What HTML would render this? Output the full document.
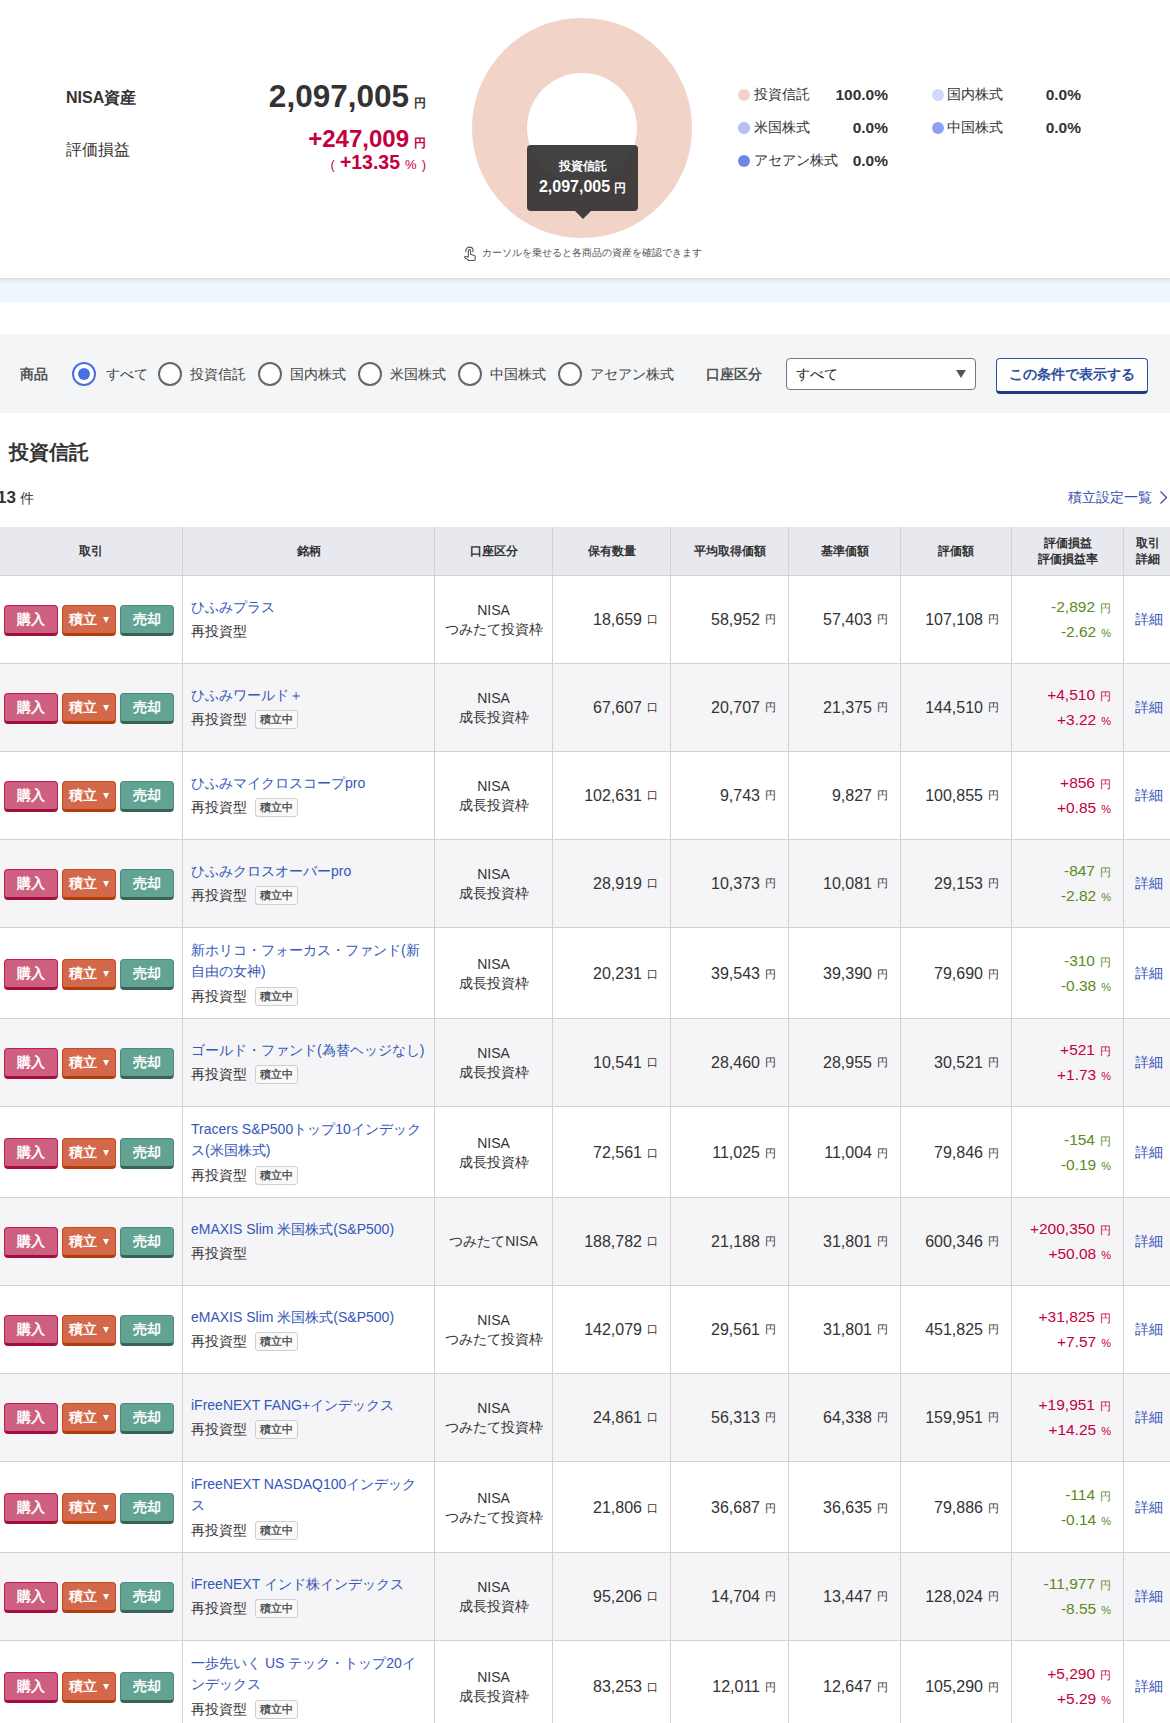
<!DOCTYPE html><html lang="ja"><head><meta charset="utf-8"><style>
*{box-sizing:border-box;margin:0;padding:0}
html,body{width:1170px;height:1723px;overflow:hidden;background:#fff}
body{font-family:"Liberation Sans",sans-serif;color:#333;position:relative}
.abs{position:absolute;white-space:nowrap}
#top{position:absolute;left:0;top:0;width:1170px;height:278px;background:#fff}
#band{position:absolute;left:0;top:278px;width:1170px;height:24px;background:linear-gradient(#d7dde4 0,#e3eaf1 2px,#ebf3f9 4px,#eff7fd 7px,#eff7fd 100%)}
#filter{position:absolute;left:0;top:334px;width:1170px;height:79px;background:#f4f5f7}
.lbl{font-size:16px;line-height:20px}
.big{font-weight:bold;font-size:31.5px;line-height:36px;color:#333;text-align:right}
.yen{display:inline-block;width:12px;font-size:12px;font-weight:bold;margin-left:5px}
.ib{display:inline-block;white-space:nowrap}
.red{color:#c4003c}
.donut{position:absolute;left:472px;top:18px;width:220px;height:220px;border-radius:50%;background:#f2d3c7}
.donut:after{content:"";position:absolute;left:55px;top:55px;width:110px;height:110px;border-radius:50%;background:#fff}
.tip{position:absolute;left:527px;top:145px;width:111px;height:66px;border-radius:4px;background:rgba(46,46,46,.9);color:#fff;text-align:center;font-weight:bold}
.tip:after{content:"";position:absolute;left:47.5px;top:66px;border-left:8px solid transparent;border-right:8px solid transparent;border-top:8px solid rgba(46,46,46,.9)}
.leg{position:absolute;font-size:14px;line-height:18px}
.dot{position:absolute;width:12px;height:12px;border-radius:50%}
.pct{position:absolute;font-size:15.5px;font-weight:bold;line-height:18px;text-align:right;width:80px}
.radio{position:absolute;top:362px;width:24px;height:24px;border-radius:50%;border:2px solid #666;background:#fff}
.radio.on{border:2.5px solid #4a6fe0}
.radio.on:after{content:"";position:absolute;left:3.5px;top:3.5px;width:12px;height:12px;border-radius:50%;background:#4a6fe0}
.rl{position:absolute;top:365px;font-size:14px;line-height:18px;color:#444}

.tbl{position:absolute;left:0;top:527px;width:1170px}
.tr{display:flex;border-bottom:1px solid #d2d2d2}
.tr.h{height:49px;background:#e8e9ee}
.tr.w{background:#fff}
.tr.g{background:#f5f5f7}
.td{border-right:1px solid #d2d2d2;flex:none;display:flex;align-items:center;position:relative}
.c1{width:183px}.c2{width:252px}.c3{width:118px}.c4{width:118px}.c5{width:118px}.c6{width:112px}.c7{width:111px}.c8{width:112px}.c9{width:47px;border-right:none}
.h .td{justify-content:center;text-align:center;font-size:12px;font-weight:bold;line-height:16px;color:#333}
.btn{position:absolute;top:50%;margin-top:-15px;height:31px;width:54px;border-radius:4px;color:#fff;font-weight:bold;font-size:14px;line-height:26px;text-align:center;border:1px solid;border-bottom-width:3px}
.b1{left:4px;background:#cd5f80;border-color:#c41a4c;border-bottom-color:#a50d3c}
.b2{left:62px;background:#d3694a;border-color:#c54a18;border-bottom-color:#b03e0c}
.b3{left:120px;background:#62a393;border-color:#4e8a79;border-bottom-color:#3a6355}
.caret{display:inline-block;width:0;height:0;border-left:3.5px solid transparent;border-right:3.5px solid transparent;border-top:6px solid #fff;margin-left:6px;vertical-align:1px}
.nm{padding-left:8px;padding-top:3px;font-size:14px;line-height:21.5px}
.nm a{color:#3457b8;text-decoration:none;display:block;white-space:nowrap;position:relative;top:-1px}
.typ{display:block;height:25px;line-height:25px;color:#333}
.badge{display:inline-block;vertical-align:top;margin-top:3px;margin-left:8px;height:19px;line-height:17px;padding:0 4px;border:1px solid #cfcfcf;border-radius:3px;background:#f9f9f9;font-size:11px;font-weight:bold;color:#555}
.acct{justify-content:center;text-align:center;font-size:14px;line-height:19px;color:#333}
.num{justify-content:flex-end;padding-right:12px;font-size:16px;color:#333}
.u{display:inline-block;width:11px;font-size:11px;margin-left:5px}
.t3 .c1 .btn{margin-top:-14px}.t3 .c3,.t3 .c4,.t3 .c5,.t3 .c6,.t3 .c7,.t3 .c8,.t3 .c9{padding-top:2px}
.u.pc{width:auto}
.pl{justify-content:flex-end;padding-right:12px;text-align:right;font-size:15.5px;line-height:24px}
.grn{color:#5b8a1e}.crm{color:#c4003c}
.det{padding-left:11px;font-size:14px;color:#3150b5}

</style></head><body>
<div id="top">
<div class="abs lbl" style="left:66px;top:88px;font-weight:bold">NISA資産</div>
<div class="abs lbl" style="left:66px;top:140px">評価損益</div>
<div class="abs big" style="right:744px;top:78px">2,097,005<span class="yen">円</span></div>
<div class="abs red" style="right:744px;top:126px;font-weight:bold;font-size:24px;line-height:26px">+247,009<span class="yen">円</span></div>
<div class="abs red" style="right:744px;top:151px;font-size:18px;line-height:22px"><span style="font-size:13px">(</span> <b style="font-size:19.5px">+13.35</b> <span style="font-size:13px">%</span> <span style="font-size:13px">)</span></div>
<div class="donut"></div>
<div class="tip"><div style="font-size:12px;line-height:14px;margin-top:13.5px">投資信託</div><div style="font-size:16px;line-height:18px;margin-top:5px">2,097,005<span style="display:inline-block;width:12px;font-size:12px;margin-left:4px">円</span></div></div>
<svg style="position:absolute;left:458px;top:242px" width="24" height="24" viewBox="0 0 24 24" fill="none" stroke="#555" stroke-width="1.1" stroke-linejoin="round"><path d="M7.9 10.2V8.7A3.55 3.55 0 0 1 15 8.7V10.2"/><path d="M10.4 15.2V8.7A1.1 1.1 0 0 1 12.6 8.7V12.3L16.3 13.6Q17.2 14 17.2 15V17.6Q17.2 18.5 16.3 18.5H10.8L6.8 15.6Q6.5 15 7.2 14.6Q8.2 14.2 10.4 15.2"/></svg>
<div class="abs" style="left:482px;top:246px;font-size:10px;line-height:14px;color:#555">カーソルを乗せると各商品の資産を確認できます</div>
<div class="dot" style="left:738px;top:89px;background:#f2d3c7"></div>
<div class="leg" style="left:754px;top:85px">投資信託</div>
<div class="pct" style="left:808px;top:86px">100.0%</div>
<div class="dot" style="left:738px;top:122px;background:#b4bff7"></div>
<div class="leg" style="left:754px;top:118px">米国株式</div>
<div class="pct" style="left:808px;top:119px">0.0%</div>
<div class="dot" style="left:738px;top:155px;background:#7089e6"></div>
<div class="leg" style="left:754px;top:151px">アセアン株式</div>
<div class="pct" style="left:808px;top:152px">0.0%</div>
<div class="dot" style="left:932px;top:89px;background:#d2d9fb"></div>
<div class="leg" style="left:947px;top:85px">国内株式</div>
<div class="pct" style="left:1001px;top:86px">0.0%</div>
<div class="dot" style="left:932px;top:122px;background:#8ea0ee"></div>
<div class="leg" style="left:947px;top:118px">中国株式</div>
<div class="pct" style="left:1001px;top:119px">0.0%</div>
</div>
<div id="band"></div>
<div id="filter"></div>
<div class="abs" style="left:20px;top:365px;font-size:14px;line-height:18px;color:#555;font-weight:bold">商品</div>
<div class="radio on" style="left:72px"></div>
<div class="rl" style="left:106px">すべて</div>
<div class="radio" style="left:158px"></div>
<div class="rl" style="left:190px">投資信託</div>
<div class="radio" style="left:258px"></div>
<div class="rl" style="left:290px">国内株式</div>
<div class="radio" style="left:358px"></div>
<div class="rl" style="left:390px">米国株式</div>
<div class="radio" style="left:458px"></div>
<div class="rl" style="left:490px">中国株式</div>
<div class="radio" style="left:558px"></div>
<div class="rl" style="left:590px">アセアン株式</div>
<div class="abs" style="left:706px;top:365px;font-size:14px;line-height:18px;color:#555;font-weight:bold">口座区分</div>
<div class="abs" style="left:786px;top:358px;width:190px;height:32px;border:1px solid #767676;border-radius:4px;background:#fff"><span style="position:absolute;left:9px;top:6px;font-size:14px;line-height:18px;color:#222">すべて</span><span style="position:absolute;left:169px;top:11px;width:0;height:0;border-left:5.5px solid transparent;border-right:5.5px solid transparent;border-top:8px solid #555"></span></div>
<div class="abs" style="left:996px;top:358px;width:152px;height:36px;border:1px solid #2d50a0;border-bottom:3px solid #1f3a80;border-radius:4px;background:#fff;text-align:center;font-size:14px;line-height:31px;font-weight:bold;color:#2d4f9c">この条件で表示する</div>
<div class="abs" style="left:8.5px;top:440px;font-size:20px;line-height:24px;font-weight:bold;color:#333">投資信託</div>
<div class="abs" style="left:-3px;top:487.5px;font-size:17px;line-height:20px;font-weight:bold;color:#333">13<span style="font-size:14px;font-weight:normal;margin-left:4px">件</span></div>
<div class="abs" style="left:1068px;top:488px;font-size:14px;line-height:18px;color:#3850b0"><span class="ib" style="width:84px">積立設定一覧</span></div><svg style="position:absolute;left:1159px;top:490px" width="10" height="15" viewBox="0 0 10 15" fill="none" stroke="#3850b0" stroke-width="1.3"><path d="M1.5 1.5L7.5 7.5L1.5 13.5"/></svg>
<div class="tbl">
<div class="tr h"><div class="td c1">取引</div><div class="td c2">銘柄</div><div class="td c3">口座区分</div><div class="td c4">保有数量</div><div class="td c5">平均取得価額</div><div class="td c6">基準価額</div><div class="td c7">評価額</div><div class="td c8">評価損益<br>評価損益率</div><div class="td c9">取引<br>詳細</div></div>
<div class="tr w" style="height:88px"><div class="td c1"><div class="btn b1">購入</div><div class="btn b2"><span class="ib" style="width:28px">積立</span><span class="caret"></span></div><div class="btn b3">売却</div></div><div class="td c2"><div class="nm"><a>ひふみプラス</a><span class="typ"><span class="ib" style="width:56px">再投資型</span></span></div></div><div class="td c3 acct"><div>NISA<br>つみたて投資枠</div></div><div class="td c4 num">18,659<span class="u">口</span></div><div class="td c5 num">58,952<span class="u">円</span></div><div class="td c6 num">57,403<span class="u">円</span></div><div class="td c7 num">107,108<span class="u">円</span></div><div class="td c8 pl grn"><div>-2,892<span class="u">円</span><br>-2.62<span class="u pc">%</span></div></div><div class="td c9 det">詳細</div></div>
<div class="tr g" style="height:88px"><div class="td c1"><div class="btn b1">購入</div><div class="btn b2"><span class="ib" style="width:28px">積立</span><span class="caret"></span></div><div class="btn b3">売却</div></div><div class="td c2"><div class="nm"><a>ひふみワールド＋</a><span class="typ"><span class="ib" style="width:56px">再投資型</span><span class="badge">積立中</span></span></div></div><div class="td c3 acct"><div>NISA<br>成長投資枠</div></div><div class="td c4 num">67,607<span class="u">口</span></div><div class="td c5 num">20,707<span class="u">円</span></div><div class="td c6 num">21,375<span class="u">円</span></div><div class="td c7 num">144,510<span class="u">円</span></div><div class="td c8 pl crm"><div>+4,510<span class="u">円</span><br>+3.22<span class="u pc">%</span></div></div><div class="td c9 det">詳細</div></div>
<div class="tr w" style="height:88px"><div class="td c1"><div class="btn b1">購入</div><div class="btn b2"><span class="ib" style="width:28px">積立</span><span class="caret"></span></div><div class="btn b3">売却</div></div><div class="td c2"><div class="nm"><a>ひふみマイクロスコープpro</a><span class="typ"><span class="ib" style="width:56px">再投資型</span><span class="badge">積立中</span></span></div></div><div class="td c3 acct"><div>NISA<br>成長投資枠</div></div><div class="td c4 num">102,631<span class="u">口</span></div><div class="td c5 num">9,743<span class="u">円</span></div><div class="td c6 num">9,827<span class="u">円</span></div><div class="td c7 num">100,855<span class="u">円</span></div><div class="td c8 pl crm"><div>+856<span class="u">円</span><br>+0.85<span class="u pc">%</span></div></div><div class="td c9 det">詳細</div></div>
<div class="tr g" style="height:88px"><div class="td c1"><div class="btn b1">購入</div><div class="btn b2"><span class="ib" style="width:28px">積立</span><span class="caret"></span></div><div class="btn b3">売却</div></div><div class="td c2"><div class="nm"><a>ひふみクロスオーバーpro</a><span class="typ"><span class="ib" style="width:56px">再投資型</span><span class="badge">積立中</span></span></div></div><div class="td c3 acct"><div>NISA<br>成長投資枠</div></div><div class="td c4 num">28,919<span class="u">口</span></div><div class="td c5 num">10,373<span class="u">円</span></div><div class="td c6 num">10,081<span class="u">円</span></div><div class="td c7 num">29,153<span class="u">円</span></div><div class="td c8 pl grn"><div>-847<span class="u">円</span><br>-2.82<span class="u pc">%</span></div></div><div class="td c9 det">詳細</div></div>
<div class="tr w t3" style="height:91px"><div class="td c1"><div class="btn b1">購入</div><div class="btn b2"><span class="ib" style="width:28px">積立</span><span class="caret"></span></div><div class="btn b3">売却</div></div><div class="td c2"><div class="nm"><a>新ホリコ・フォーカス・ファンド(新</a><a>自由の女神)</a><span class="typ"><span class="ib" style="width:56px">再投資型</span><span class="badge">積立中</span></span></div></div><div class="td c3 acct"><div>NISA<br>成長投資枠</div></div><div class="td c4 num">20,231<span class="u">口</span></div><div class="td c5 num">39,543<span class="u">円</span></div><div class="td c6 num">39,390<span class="u">円</span></div><div class="td c7 num">79,690<span class="u">円</span></div><div class="td c8 pl grn"><div>-310<span class="u">円</span><br>-0.38<span class="u pc">%</span></div></div><div class="td c9 det">詳細</div></div>
<div class="tr g" style="height:88px"><div class="td c1"><div class="btn b1">購入</div><div class="btn b2"><span class="ib" style="width:28px">積立</span><span class="caret"></span></div><div class="btn b3">売却</div></div><div class="td c2"><div class="nm"><a>ゴールド・ファンド(為替ヘッジなし)</a><span class="typ"><span class="ib" style="width:56px">再投資型</span><span class="badge">積立中</span></span></div></div><div class="td c3 acct"><div>NISA<br>成長投資枠</div></div><div class="td c4 num">10,541<span class="u">口</span></div><div class="td c5 num">28,460<span class="u">円</span></div><div class="td c6 num">28,955<span class="u">円</span></div><div class="td c7 num">30,521<span class="u">円</span></div><div class="td c8 pl crm"><div>+521<span class="u">円</span><br>+1.73<span class="u pc">%</span></div></div><div class="td c9 det">詳細</div></div>
<div class="tr w t3" style="height:91px"><div class="td c1"><div class="btn b1">購入</div><div class="btn b2"><span class="ib" style="width:28px">積立</span><span class="caret"></span></div><div class="btn b3">売却</div></div><div class="td c2"><div class="nm"><a>Tracers S&amp;P500トップ10インデック</a><a>ス(米国株式)</a><span class="typ"><span class="ib" style="width:56px">再投資型</span><span class="badge">積立中</span></span></div></div><div class="td c3 acct"><div>NISA<br>成長投資枠</div></div><div class="td c4 num">72,561<span class="u">口</span></div><div class="td c5 num">11,025<span class="u">円</span></div><div class="td c6 num">11,004<span class="u">円</span></div><div class="td c7 num">79,846<span class="u">円</span></div><div class="td c8 pl grn"><div>-154<span class="u">円</span><br>-0.19<span class="u pc">%</span></div></div><div class="td c9 det">詳細</div></div>
<div class="tr g" style="height:88px"><div class="td c1"><div class="btn b1">購入</div><div class="btn b2"><span class="ib" style="width:28px">積立</span><span class="caret"></span></div><div class="btn b3">売却</div></div><div class="td c2"><div class="nm"><a>eMAXIS Slim 米国株式(S&amp;P500)</a><span class="typ"><span class="ib" style="width:56px">再投資型</span></span></div></div><div class="td c3 acct"><div>つみたてNISA</div></div><div class="td c4 num">188,782<span class="u">口</span></div><div class="td c5 num">21,188<span class="u">円</span></div><div class="td c6 num">31,801<span class="u">円</span></div><div class="td c7 num">600,346<span class="u">円</span></div><div class="td c8 pl crm"><div>+200,350<span class="u">円</span><br>+50.08<span class="u pc">%</span></div></div><div class="td c9 det">詳細</div></div>
<div class="tr w" style="height:88px"><div class="td c1"><div class="btn b1">購入</div><div class="btn b2"><span class="ib" style="width:28px">積立</span><span class="caret"></span></div><div class="btn b3">売却</div></div><div class="td c2"><div class="nm"><a>eMAXIS Slim 米国株式(S&amp;P500)</a><span class="typ"><span class="ib" style="width:56px">再投資型</span><span class="badge">積立中</span></span></div></div><div class="td c3 acct"><div>NISA<br>つみたて投資枠</div></div><div class="td c4 num">142,079<span class="u">口</span></div><div class="td c5 num">29,561<span class="u">円</span></div><div class="td c6 num">31,801<span class="u">円</span></div><div class="td c7 num">451,825<span class="u">円</span></div><div class="td c8 pl crm"><div>+31,825<span class="u">円</span><br>+7.57<span class="u pc">%</span></div></div><div class="td c9 det">詳細</div></div>
<div class="tr g" style="height:88px"><div class="td c1"><div class="btn b1">購入</div><div class="btn b2"><span class="ib" style="width:28px">積立</span><span class="caret"></span></div><div class="btn b3">売却</div></div><div class="td c2"><div class="nm"><a>iFreeNEXT FANG+インデックス</a><span class="typ"><span class="ib" style="width:56px">再投資型</span><span class="badge">積立中</span></span></div></div><div class="td c3 acct"><div>NISA<br>つみたて投資枠</div></div><div class="td c4 num">24,861<span class="u">口</span></div><div class="td c5 num">56,313<span class="u">円</span></div><div class="td c6 num">64,338<span class="u">円</span></div><div class="td c7 num">159,951<span class="u">円</span></div><div class="td c8 pl crm"><div>+19,951<span class="u">円</span><br>+14.25<span class="u pc">%</span></div></div><div class="td c9 det">詳細</div></div>
<div class="tr w t3" style="height:91px"><div class="td c1"><div class="btn b1">購入</div><div class="btn b2"><span class="ib" style="width:28px">積立</span><span class="caret"></span></div><div class="btn b3">売却</div></div><div class="td c2"><div class="nm"><a>iFreeNEXT NASDAQ100インデック</a><a>ス</a><span class="typ"><span class="ib" style="width:56px">再投資型</span><span class="badge">積立中</span></span></div></div><div class="td c3 acct"><div>NISA<br>つみたて投資枠</div></div><div class="td c4 num">21,806<span class="u">口</span></div><div class="td c5 num">36,687<span class="u">円</span></div><div class="td c6 num">36,635<span class="u">円</span></div><div class="td c7 num">79,886<span class="u">円</span></div><div class="td c8 pl grn"><div>-114<span class="u">円</span><br>-0.14<span class="u pc">%</span></div></div><div class="td c9 det">詳細</div></div>
<div class="tr g" style="height:88px"><div class="td c1"><div class="btn b1">購入</div><div class="btn b2"><span class="ib" style="width:28px">積立</span><span class="caret"></span></div><div class="btn b3">売却</div></div><div class="td c2"><div class="nm"><a>iFreeNEXT インド株インデックス</a><span class="typ"><span class="ib" style="width:56px">再投資型</span><span class="badge">積立中</span></span></div></div><div class="td c3 acct"><div>NISA<br>成長投資枠</div></div><div class="td c4 num">95,206<span class="u">口</span></div><div class="td c5 num">14,704<span class="u">円</span></div><div class="td c6 num">13,447<span class="u">円</span></div><div class="td c7 num">128,024<span class="u">円</span></div><div class="td c8 pl grn"><div>-11,977<span class="u">円</span><br>-8.55<span class="u pc">%</span></div></div><div class="td c9 det">詳細</div></div>
<div class="tr w t3" style="height:91px"><div class="td c1"><div class="btn b1">購入</div><div class="btn b2"><span class="ib" style="width:28px">積立</span><span class="caret"></span></div><div class="btn b3">売却</div></div><div class="td c2"><div class="nm"><a>一歩先いく US テック・トップ20イ</a><a>ンデックス</a><span class="typ"><span class="ib" style="width:56px">再投資型</span><span class="badge">積立中</span></span></div></div><div class="td c3 acct"><div>NISA<br>成長投資枠</div></div><div class="td c4 num">83,253<span class="u">口</span></div><div class="td c5 num">12,011<span class="u">円</span></div><div class="td c6 num">12,647<span class="u">円</span></div><div class="td c7 num">105,290<span class="u">円</span></div><div class="td c8 pl crm"><div>+5,290<span class="u">円</span><br>+5.29<span class="u pc">%</span></div></div><div class="td c9 det">詳細</div></div>
</div>
</body></html>
